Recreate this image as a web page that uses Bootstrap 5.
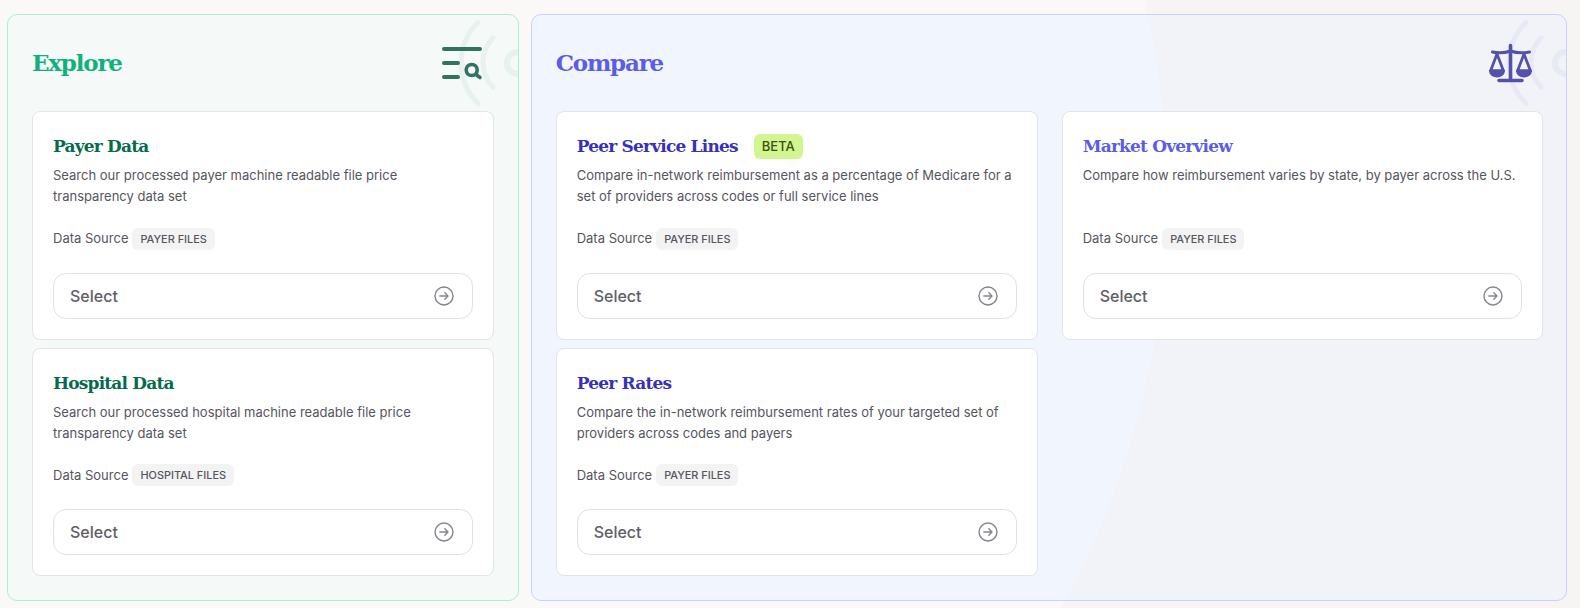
<!doctype html>
<html lang="en">
<head>
<meta charset="utf-8">
<title>Explore and Compare</title>
<link href="https://cdn.jsdelivr.net/npm/bootstrap@5.3.0/dist/css/bootstrap.min.css" rel="stylesheet">
<style>
html,body{height:100%;}
body{font-family:Inter,"Noto Sans",sans-serif;overflow:hidden;
  background:radial-gradient(circle 860px at 307px 195px,#fbf9f7 859.5px,#f6f5f3 860.5px);}
.board{display:flex;gap:12px;padding:14px 13px 7px 7px;height:608px;}
.zone{position:relative;overflow:hidden;border:1px solid;border-radius:10px;padding:24px;height:587px;}
.zone-explore{width:512px;background:#f5f9f7;border-color:#a7f3d0;}
.zone-compare{width:1037px;border-color:#c7d2fe;
  background:radial-gradient(circle 860px at -225px 180px,#f1f5fd 859.5px,#f2f3f8 860.5px);}
.zone-head{position:relative;height:72px;}
.zone-title{font-family:"DejaVu Serif","Liberation Serif",serif;font-weight:700;font-size:23px;line-height:48px;margin:0;letter-spacing:-1.2px;}
.zone-explore .zone-title{color:#10b27c;}
.zone-compare .zone-title{color:#5b5ce8;}
.waves{position:absolute;right:0;top:0;width:80px;height:110px;}
.zone-icon{position:absolute;z-index:1;}
.zone-explore .zone-icon{left:427px;top:27px;}
.zone-compare .zone-icon{left:956px;top:28px;}
.tile-list{position:relative;z-index:1;display:grid;row-gap:8px;}
.zone-compare .tile-list{grid-template-columns:482px 481px;column-gap:24px;}
.tile{border:1px solid #e2e4e6;border-radius:8px;padding:20px;background:#fff;box-shadow:none;height:228.5px;}
.tile-title{font-family:"DejaVu Serif","Liberation Serif",serif;font-weight:700;font-size:17px;line-height:28px;margin:0;letter-spacing:-.8px;}
.zone-explore .tile-title{color:#056b4c;}
.zone-compare .tile-title{color:#3730bb;}
.zone-compare .tile-title.lite{color:#5b5ce8;}
.tile-desc{font-size:13px;line-height:21px;color:#55555e;margin:5px 0 0;height:42px;}
.source{font-size:13px;color:#55555e;margin-top:20.75px;height:22px;}
.src-tag{font-family:Inter,sans-serif;font-size:10.9px;font-weight:500;background:#f3f3f4;color:#55555f;border-radius:6px;padding:0 8px;line-height:22px;height:22px;margin-left:4px;}
.beta-tag{font-family:Inter,sans-serif;font-size:13px;font-weight:500;background:#d1f58f;color:#365314;border-radius:6px;padding:0 8px;line-height:25px;height:25px;margin-left:16px;letter-spacing:0;}
.pick{margin-top:23px;height:46px;width:100%;border:1px solid #e0e1e3;border-radius:13px;background:#fff;color:#5e5e67;font-size:16px;font-weight:500;padding:0 18px 0 16px;}
.pick:hover{background:#fff;color:#5e5e67;border-color:#e0e1e3;}
</style>
</head>
<body>
<main class="board">
  <section class="zone zone-explore">
    <svg class="waves" viewBox="0 0 80 110" fill="none" stroke="#e7f1ed" stroke-linecap="round" aria-hidden="true">
      <path d="M40 7.5A57 57 0 0 0 40 88.5" stroke-width="5"/>
      <path d="M55 23A35 35 0 0 0 55 72" stroke-width="5"/>
      <circle cx="80" cy="48" r="11" stroke-width="6"/>
    </svg>
    <svg class="zone-icon" width="50" height="44" viewBox="0 0 50 44" fill="none" stroke="#2f7360" stroke-linecap="round" aria-hidden="true">
      <path d="M9 7H45M9 21H23M9 35H23" stroke-width="4"/>
      <circle cx="36.700" cy="28" r="5.500" stroke-width="3.600"/>
      <path d="M41 32.500L45 35.500" stroke-width="3.600"/>
    </svg>
    <div class="zone-head"><h2 class="zone-title">Explore</h2></div>
    <div class="tile-list">
      <article class="card tile">
        <h3 class="tile-title">Payer Data</h3>
        <p class="tile-desc">Search our processed payer machine readable file price transparency data set</p>
        <div class="source d-flex align-items-center">Data Source <span class="src-tag">PAYER FILES</span></div>
        <button class="btn pick d-flex align-items-center justify-content-between" type="button">Select
          <svg width="20" height="20" viewBox="0 0 20 20" fill="none" stroke="#85858c" stroke-width="1.4" stroke-linecap="round" stroke-linejoin="round" aria-hidden="true"><circle cx="10" cy="10" r="9"/><path d="M5.800 10H14M10.800 6.800L14 10L10.800 13.200"/></svg>
        </button>
      </article>
      <article class="card tile">
        <h3 class="tile-title">Hospital Data</h3>
        <p class="tile-desc">Search our processed hospital machine readable file price transparency data set</p>
        <div class="source d-flex align-items-center">Data Source <span class="src-tag">HOSPITAL FILES</span></div>
        <button class="btn pick d-flex align-items-center justify-content-between" type="button">Select
          <svg width="20" height="20" viewBox="0 0 20 20" fill="none" stroke="#85858c" stroke-width="1.4" stroke-linecap="round" stroke-linejoin="round" aria-hidden="true"><circle cx="10" cy="10" r="9"/><path d="M5.800 10H14M10.800 6.800L14 10L10.800 13.200"/></svg>
        </button>
      </article>
    </div>
  </section>
  <section class="zone zone-compare">
    <svg class="waves" viewBox="0 0 80 110" fill="none" stroke="#e7e9f5" stroke-linecap="round" aria-hidden="true">
      <path d="M40 7.5A57 57 0 0 0 40 88.5" stroke-width="5"/>
      <path d="M55 23A35 35 0 0 0 55 72" stroke-width="5"/>
      <circle cx="80" cy="48" r="11" stroke-width="6"/>
    </svg>
    <svg class="zone-icon" width="50" height="44" viewBox="0 0 50 44" fill="none" stroke="#5352a8" stroke-linecap="round" stroke-linejoin="round" aria-hidden="true">
      <path d="M22.500 2.500V37M11 37.500H34" stroke-width="3.600"/>
      <path d="M4.500 9Q14 11 22.500 8Q31 11 41.500 9" stroke-width="3"/>
      <path d="M9 11L2.500 28H15.500ZM36 11L29.500 28H42.500Z" stroke-width="2.800"/>
      <path d="M2.500 28A6.500 5 0 0 0 15.500 28ZM29.500 28A6.500 5 0 0 0 42.500 28Z" stroke-width="2.800" fill="#5352a8"/>
    </svg>
    <div class="zone-head"><h2 class="zone-title">Compare</h2></div>
    <div class="tile-list">
      <article class="card tile">
        <h3 class="tile-title d-flex align-items-center">Peer Service Lines <span class="beta-tag">BETA</span></h3>
        <p class="tile-desc">Compare in-network reimbursement as a percentage of Medicare for a set of providers across codes or full service lines</p>
        <div class="source d-flex align-items-center">Data Source <span class="src-tag">PAYER FILES</span></div>
        <button class="btn pick d-flex align-items-center justify-content-between" type="button">Select
          <svg width="20" height="20" viewBox="0 0 20 20" fill="none" stroke="#85858c" stroke-width="1.4" stroke-linecap="round" stroke-linejoin="round" aria-hidden="true"><circle cx="10" cy="10" r="9"/><path d="M5.800 10H14M10.800 6.800L14 10L10.800 13.200"/></svg>
        </button>
      </article>
      <article class="card tile">
        <h3 class="tile-title lite">Market Overview</h3>
        <p class="tile-desc">Compare how reimbursement varies by state, by payer across the U.S.</p>
        <div class="source d-flex align-items-center">Data Source <span class="src-tag">PAYER FILES</span></div>
        <button class="btn pick d-flex align-items-center justify-content-between" type="button">Select
          <svg width="20" height="20" viewBox="0 0 20 20" fill="none" stroke="#85858c" stroke-width="1.4" stroke-linecap="round" stroke-linejoin="round" aria-hidden="true"><circle cx="10" cy="10" r="9"/><path d="M5.800 10H14M10.800 6.800L14 10L10.800 13.200"/></svg>
        </button>
      </article>
      <article class="card tile">
        <h3 class="tile-title">Peer Rates</h3>
        <p class="tile-desc">Compare the in-network reimbursement rates of your targeted set of providers across codes and payers</p>
        <div class="source d-flex align-items-center">Data Source <span class="src-tag">PAYER FILES</span></div>
        <button class="btn pick d-flex align-items-center justify-content-between" type="button">Select
          <svg width="20" height="20" viewBox="0 0 20 20" fill="none" stroke="#85858c" stroke-width="1.4" stroke-linecap="round" stroke-linejoin="round" aria-hidden="true"><circle cx="10" cy="10" r="9"/><path d="M5.800 10H14M10.800 6.800L14 10L10.800 13.200"/></svg>
        </button>
      </article>
    </div>
  </section>
</main>
<script src="https://cdn.jsdelivr.net/npm/bootstrap@5.3.0/dist/js/bootstrap.bundle.min.js"></script>
</body>
</html>
